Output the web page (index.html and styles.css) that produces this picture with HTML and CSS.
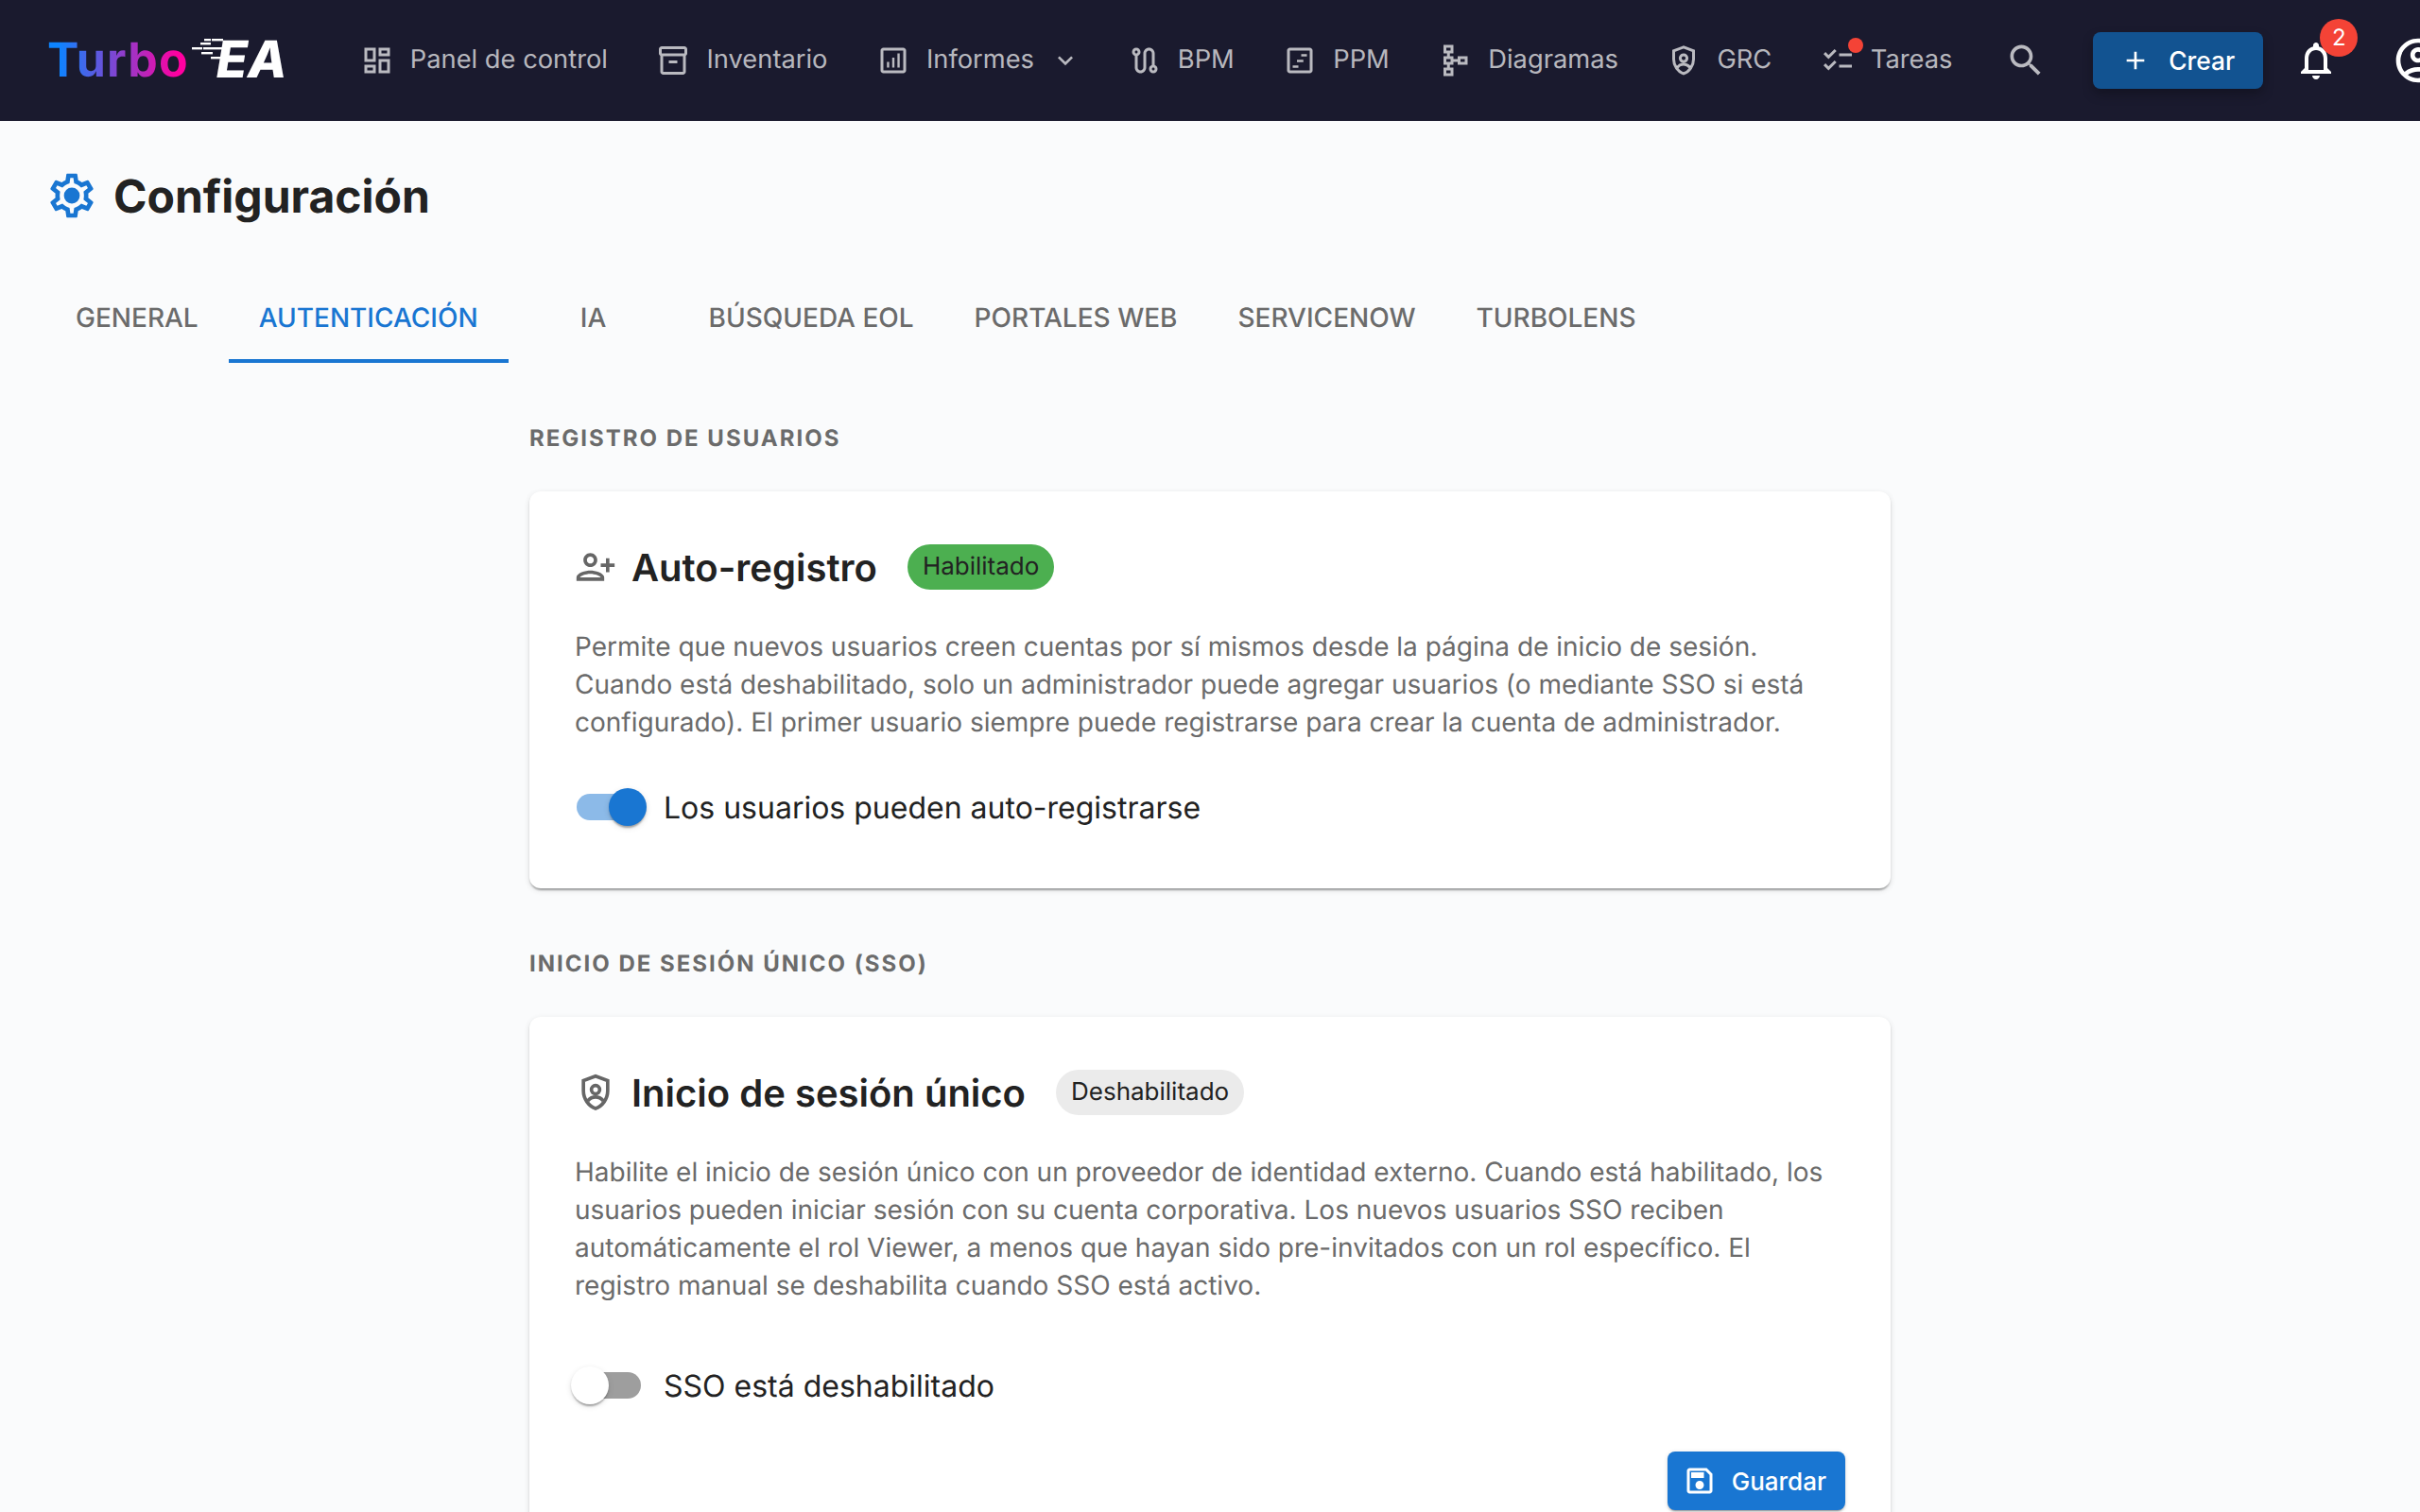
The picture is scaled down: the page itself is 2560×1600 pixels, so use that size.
FILE: index.html
```html
<!DOCTYPE html>
<html lang="es">
<head>
    <meta charset="UTF-8">
    <title>Configuración</title>
    <link rel="stylesheet" href="styles.css">
</head>
<body>
    <header class="topbar">
        <div class="logo">
            <span class="logo-turbo">Turbo</span>
            <span class="logo-ea">EA</span>
            <svg class="logo-lines" viewBox="0 0 40 24" fill="#fff">
                <rect x="13" y="0" width="7" height="2.4"/>
                <rect x="21" y="0" width="12" height="2.4"/>
                <rect x="9" y="4" width="11" height="2.4"/>
                <rect x="0" y="9" width="11" height="2.4"/>
                <rect x="12" y="9" width="20" height="2.4"/>
                <rect x="10" y="14" width="12" height="2.4"/>
                <rect x="20" y="19" width="10" height="2.4"/>
            </svg>
        </div>
        <nav class="nav">
            <a class="nav-item"><svg class="nav-icon" viewBox="0 0 24 24"><path d="M19 5v2h-4V5h4M9 5v6H5V5h4m10 8v6h-4v-6h4M9 17v2H5v-2h4M21 3h-8v6h8V3zM11 3H3v10h8V3zm10 8h-8v10h8V11zm-10 4H3v6h8v-6z"/></svg>Panel de control</a>
            <a class="nav-item"><svg class="nav-icon" viewBox="0 0 24 24"><path d="M20 2H4c-1 0-2 .9-2 2v3.01c0 .72.43 1.34 1 1.69V20c0 1.1 1.1 2 2 2h14c.9 0 2-.9 2-2V8.7c.57-.35 1-.97 1-1.69V4c0-1.1-1-2-2-2zm-1 18H5V9h14v11zm1-13H4V4h16v3z"/><path d="M9 12h6v2H9z"/></svg>Inventario</a>
            <a class="nav-item nav-item-menu"><svg class="nav-icon" viewBox="0 0 24 24"><path d="M19 3H5c-1.1 0-2 .9-2 2v14c0 1.1.9 2 2 2h14c1.1 0 2-.9 2-2V5c0-1.1-.9-2-2-2zm0 16H5V5h14v14z"/><path d="M7.5 13h1.6v4H7.5zm3.7-3h1.6v7h-1.6zm3.7-3h1.6v10h-1.6z"/></svg>Informes<svg class="nav-chevron" viewBox="0 0 24 24"><path d="M16.59 8.59 12 13.17 7.41 8.59 6 10l6 6 6-6z"/></svg></a>
            <a class="nav-item"><svg class="nav-icon" viewBox="0 0 24 24"><path d="M19 15.18V7c0-2.21-1.79-4-4-4s-4 1.79-4 4v10c0 1.1-.9 2-2 2s-2-.9-2-2V8.82C8.16 8.4 9 7.3 9 6c0-1.66-1.34-3-3-3S3 4.34 3 6c0 1.3.84 2.4 2 2.82V17c0 2.21 1.79 4 4 4s4-1.79 4-4V7c0-1.1.9-2 2-2s2 .9 2 2v8.18c-1.16.41-2 1.51-2 2.82 0 1.66 1.34 3 3 3s3-1.34 3-3c0-1.3-.84-2.4-2-2.82zM6 7c-.55 0-1-.45-1-1s.45-1 1-1 1 .45 1 1-.45 1-1 1zm12 12c-.55 0-1-.45-1-1s.45-1 1-1 1 .45 1 1-.45 1-1 1z"/></svg>BPM</a>
            <a class="nav-item"><svg class="nav-icon" viewBox="0 0 24 24"><path d="M19 3H5c-1.1 0-2 .9-2 2v14c0 1.1.9 2 2 2h14c1.1 0 2-.9 2-2V5c0-1.1-.9-2-2-2zm0 16H5V5h14v14z"/><path d="M13 7.5h4v1.6h-4zm-3 4h4.5v1.6H10zm-3 4h4v1.6H7z"/></svg>PPM</a>
            <a class="nav-item"><svg class="nav-icon" viewBox="0 0 24 24"><path d="M14 9v2h-3V9H8.5V7H11V1H4v6h2.5v2H4v6h2.5v2H4v6h7v-6H8.5v-2H11v-2h3v2h7V9h-7zM9 3v2H6V3h3zm0 8v2H6v-2h3zm0 8v2H6v-2h3zm10-6h-3v-2h3v2z"/></svg>Diagramas</a>
            <a class="nav-item"><svg class="nav-icon" viewBox="0 0 24 24"><path class="shield-stroke" d="M12 2.6 5 5.2v5.9c0 4.6 3 8.8 7 10.2 4-1.4 7-5.6 7-10.2V5.2z"/><circle class="shield-stroke" cx="12" cy="10.4" r="2.4"/><path class="shield-stroke" d="M7.6 16.8c1.2-1.4 2.7-2.1 4.4-2.1s3.2.7 4.4 2.1"/></svg>GRC</a>
            <a class="nav-item"><span class="icon-wrap"><svg class="nav-icon" viewBox="0 0 24 24"><path d="M22 7h-9v2h9V7zm0 8h-9v2h9v-2zM5.54 11 2 7.46l1.41-1.41 2.12 2.12 4.24-4.24 1.41 1.41L5.54 11zm0 8L2 15.46l1.41-1.41 2.12 2.12 4.24-4.24 1.41 1.41L5.54 19z"/></svg><span class="task-dot"></span></span>Tareas</a>
        </nav>
        <svg class="search-icon" viewBox="0 0 24 24"><path d="M15.5 14h-.79l-.28-.27C15.41 12.59 16 11.11 16 9.5 16 5.91 13.09 3 9.5 3S3 5.91 3 9.5 5.91 16 9.5 16c1.61 0 3.09-.59 4.23-1.57l.27.28v.79l5 4.99L20.49 19l-4.99-5zm-6 0C7.01 14 5 11.99 5 9.5S7.01 5 9.5 5 14 7.01 14 9.5 11.99 14 9.5 14z"/></svg>
        <button class="create-button"><svg viewBox="0 0 24 24"><path d="M19 13h-6v6h-2v-6H5v-2h6V5h2v6h6v2z"/></svg>Crear</button>
        <div class="bell">
            <svg viewBox="0 0 24 24"><path d="M12 22c1.1 0 2-.9 2-2h-4c0 1.1.9 2 2 2zm6-6v-5c0-3.07-1.63-5.64-4.5-6.32V4c0-.83-.67-1.5-1.5-1.5s-1.5.67-1.5 1.5v.68C7.64 5.36 6 7.92 6 11v5l-2 2v1h16v-1l-2-2zm-2 1H8v-6c0-2.48 1.51-4.5 4-4.5s4 2.02 4 4.5v6z"/></svg>
            <span class="bell-badge">2</span>
        </div>
        <svg class="avatar" viewBox="0 0 24 24"><path d="M12 2C6.48 2 2 6.48 2 12s4.48 10 10 10 10-4.48 10-10S17.52 2 12 2zM7.35 18.5C8.66 17.56 10.26 17 12 17s3.34.56 4.65 1.5c-1.31.94-2.91 1.5-4.65 1.5s-3.34-.56-4.65-1.5zm10.79-1.38C16.45 15.8 14.32 15 12 15s-4.45.8-6.14 2.12C4.7 15.73 4 13.95 4 12c0-4.42 3.58-8 8-8s8 3.58 8 8c0 1.95-.7 3.73-1.86 5.12z"/><path d="M12 6c-1.93 0-3.5 1.57-3.5 3.5S10.07 13 12 13s3.5-1.57 3.5-3.5S13.93 6 12 6zm0 5c-.83 0-1.5-.67-1.5-1.5S11.17 8 12 8s1.5.67 1.5 1.5S12.83 11 12 11z"/></svg>
    </header>

    <main class="page">
        <div class="page-title">
            <svg class="gear" viewBox="0 0 24 24"><path d="M19.43 12.98c.04-.32.07-.64.07-.98 0-.34-.03-.66-.07-.98l2.11-1.65c.19-.15.24-.42.12-.64l-2-3.46c-.09-.16-.26-.25-.44-.25-.06 0-.12.01-.17.03l-2.49 1c-.52-.4-1.08-.73-1.69-.98l-.38-2.65C14.46 2.18 14.25 2 14 2h-4c-.25 0-.46.18-.49.42l-.38 2.65c-.61.25-1.17.59-1.69.98l-2.49-1c-.06-.02-.12-.03-.18-.03-.17 0-.34.09-.43.25l-2 3.46c-.13.22-.07.49.12.64l2.11 1.65c-.04.32-.07.65-.07.98 0 .33.03.66.07.98l-2.11 1.65c-.19.15-.24.42-.12.64l2 3.46c.09.16.26.25.44.25.06 0 .12-.01.17-.03l2.49-1c.52.4 1.08.73 1.69.98l.38 2.65c.03.24.24.42.49.42h4c.25 0 .46-.18.49-.42l.38-2.65c.61-.25 1.17-.59 1.69-.98l2.49 1c.06.02.12.03.18.03.17 0 .34-.09.43-.25l2-3.46c.12-.22.07-.49-.12-.64l-2.11-1.65zm-1.98-1.71c.04.31.05.52.05.73 0 .21-.02.43-.05.73l-.14 1.13.89.7 1.08.84-.7 1.21-1.27-.51-1.04-.42-.9.68c-.43.32-.84.56-1.25.73l-1.06.43-.16 1.13-.2 1.35h-1.4l-.19-1.35-.16-1.13-1.06-.43c-.43-.18-.83-.41-1.23-.71l-.91-.7-1.06.43-1.27.51-.7-1.21 1.08-.84.89-.7-.14-1.13c-.03-.31-.05-.54-.05-.74s.02-.43.05-.73l.14-1.13-.89-.7-1.08-.84.7-1.21 1.27.51 1.04.42.9-.68c.43-.32.84-.56 1.25-.73l1.06-.43.16-1.13.2-1.35h1.39l.19 1.35.16 1.13 1.06.43c.43.18.83.41 1.23.71l.91.7 1.06-.43 1.27-.51.7 1.21-1.07.85-.89.7.14 1.13z"/><circle cx="12" cy="12" r="3.6"/></svg>
            <h1>Configuración</h1>
        </div>

        <div class="tabs">
            <a class="tab">General</a>
            <a class="tab tab-active">Autenticación</a>
            <a class="tab">IA</a>
            <a class="tab">Búsqueda EOL</a>
            <a class="tab">Portales web</a>
            <a class="tab">ServiceNow</a>
            <a class="tab">TurboLens</a>
        </div>

        <section class="content">
            <h2 class="section-label">Registro de usuarios</h2>
            <div class="card">
                <div class="card-header">
                    <svg class="card-icon card-icon-flip" viewBox="0 0 24 24"><path d="M15 12c2.21 0 4-1.79 4-4s-1.79-4-4-4-4 1.79-4 4 1.79 4 4 4zm0-6c1.1 0 2 .9 2 2s-.9 2-2 2-2-.9-2-2 .9-2 2-2zm0 8c-2.67 0-8 1.34-8 4v2h16v-2c0-2.66-5.33-4-8-4zm-6 4c.22-.72 3.31-2 6-2 2.7 0 5.8 1.29 6 2H9zm-3-3v-3h3v-2H6V7H4v3H1v2h3v3h2z"/></svg>
                    <h3 class="card-title">Auto-registro</h3>
                    <span class="chip chip-on">Habilitado</span>
                </div>
                <p class="card-text">Permite que nuevos usuarios creen cuentas por sí mismos desde la página de inicio de sesión. Cuando está deshabilitado, solo un administrador puede agregar usuarios (o mediante SSO si está configurado). El primer usuario siempre puede registrarse para crear la cuenta de administrador.</p>
                <div class="switch-row">
                    <span class="switch switch-on"><span class="switch-thumb"></span></span>
                    <span class="switch-label">Los usuarios pueden auto-registrarse</span>
                </div>
            </div>

            <h2 class="section-label">Inicio de sesión único (SSO)</h2>
            <div class="card">
                <div class="card-header">
                    <svg class="card-icon" viewBox="0 0 24 24"><path class="shield-stroke" d="M12 2.6 5 5.2v5.9c0 4.6 3 8.8 7 10.2 4-1.4 7-5.6 7-10.2V5.2z"/><circle class="shield-stroke" cx="12" cy="10.4" r="2.4"/><path class="shield-stroke" d="M7.6 16.8c1.2-1.4 2.7-2.1 4.4-2.1s3.2.7 4.4 2.1"/></svg>
                    <h3 class="card-title">Inicio de sesión único</h3>
                    <span class="chip">Deshabilitado</span>
                </div>
                <p class="card-text">Habilite el inicio de sesión único con un proveedor de identidad externo. Cuando está habilitado, los usuarios pueden iniciar sesión con su cuenta corporativa. Los nuevos usuarios SSO reciben automáticamente el rol Viewer, a menos que hayan sido pre-invitados con un rol específico. El registro manual se deshabilita cuando SSO está activo.</p>
                <div class="switch-row switch-row-wide">
                    <span class="switch"><span class="switch-thumb"></span></span>
                    <span class="switch-label">SSO está deshabilitado</span>
                </div>
                <div class="card-actions">
                    <button class="save-button"><svg viewBox="0 0 24 24"><path d="M17 3H5c-1.11 0-2 .9-2 2v14c0 1.1.89 2 2 2h14c1.1 0 2-.9 2-2V7l-4-4zm2 16H5V5h11.17L19 7.83V19zm-7-7c-1.66 0-3 1.34-3 3s1.34 3 3 3 3-1.34 3-3-1.34-3-3-3zM6 6h9v4H6z"/></svg>Guardar</button>
                </div>
            </div>
        </section>
    </main>
</body>
</html>
```

FILE: styles.css
```css
* {
    box-sizing: border-box;
}
html, body {
    margin: 0;
    height: 100%;
    overflow: hidden;
}
body {
    font-family: Inter, "Liberation Sans", sans-serif;
    text-rendering: geometricPrecision;
    background-color: #fafbfc;
    color: #1a1a1a;
}

/* top bar */
.topbar {
    display: flex;
    align-items: center;
    height: 128px;
    padding-left: 50px;
    background-color: #1a1a2e;
    overflow: hidden;
}
.logo {
    position: relative;
    display: flex;
    align-items: center;
    flex-shrink: 0;
    width: 254px;
    margin-right: 51px;
    line-height: 64px;
}
.logo-turbo {
    font-size: 50px;
    font-weight: 700;
    letter-spacing: 1.1px;
    background: linear-gradient(90deg, #0d84ff 8%, #ff00a0 92%);
    -webkit-background-clip: text;
    background-clip: text;
    color: transparent;
}
.logo-ea {
    margin-left: 29px;
    font-size: 54px;
    font-weight: 800;
    font-style: italic;
    color: #fff;
}
.logo-lines {
    position: absolute;
    left: 153px;
    top: 9px;
    width: 40px;
    height: 24px;
}
.nav {
    display: flex;
    align-items: center;
    flex-shrink: 0;
}
.nav-item {
    display: flex;
    align-items: center;
    gap: 17px;
    padding: 0 25.75px 4px;
    font-size: 27.3px;
    white-space: nowrap;
    color: rgba(255, 255, 255, 0.7);
}
.nav-item-menu {
    gap: 0;
    padding-right: 24px;
}
.nav-item-menu .nav-icon {
    margin-right: 17px;
}
.nav-icon {
    width: 36px;
    height: 36px;
    margin-bottom: -4px;
    fill: rgba(255, 255, 255, 0.7);
    flex-shrink: 0;
    display: block;
}
.nav-chevron {
    width: 32px;
    height: 32px;
    margin-left: 17px;
    margin-bottom: -4px;
    fill: rgba(255, 255, 255, 0.7);
}
.shield-stroke {
    fill: none;
    stroke: currentColor;
    stroke-width: 2;
}
.nav-icon .shield-stroke {
    stroke: rgba(255, 255, 255, 0.7);
}
.icon-wrap {
    position: relative;
    display: block;
}
.task-dot {
    position: absolute;
    top: -6px;
    right: -9px;
    width: 16px;
    height: 16px;
    border-radius: 50%;
    background-color: #f44336;
}
.search-icon {
    width: 44px;
    height: 44px;
    margin-left: 30px;
    flex-shrink: 0;
    fill: rgba(255, 255, 255, 0.7);
}
.create-button {
    display: flex;
    align-items: center;
    gap: 19px;
    flex-shrink: 0;
    width: 180px;
    height: 60px;
    margin-left: 49px;
    padding: 0 0 0 29px;
    border: none;
    border-radius: 8px;
    background-color: #125391;
    color: #fff;
    font-family: inherit;
    font-size: 26.4px;
    font-weight: 500;
    box-shadow: 0 6px 12px rgba(0, 0, 0, 0.25);
}
.create-button svg {
    width: 32px;
    height: 32px;
    fill: #fff;
}
.bell {
    position: relative;
    flex-shrink: 0;
    width: 48px;
    height: 48px;
    margin-left: 32px;
}
.bell svg {
    display: block;
    width: 48px;
    height: 48px;
    fill: #fff;
}
.bell-badge {
    position: absolute;
    left: 28px;
    top: -20px;
    width: 40px;
    height: 40px;
    border-radius: 50%;
    background-color: #f44336;
    color: #fff;
    font-size: 24px;
    line-height: 40px;
    text-align: center;
}
.avatar {
    flex-shrink: 0;
    width: 56px;
    height: 56px;
    margin-left: 56px;
    fill: #fff;
}

/* page heading and tabs */
.page-title {
    display: flex;
    align-items: center;
    gap: 16px;
    height: 56px;
    margin: 51px 0 0 48px;
}
.gear {
    width: 56px;
    height: 56px;
    fill: #1976d2;
}
.page-title h1 {
    margin: 0;
    font-size: 48px;
    font-weight: 700;
    color: #222;
}
.tabs {
    display: flex;
    margin: 53px 0 0 48px;
}
.tab {
    display: flex;
    align-items: center;
    justify-content: center;
    min-width: 180px;
    height: 96px;
    padding: 0 32px;
    font-size: 28px;
    font-weight: 500;
    text-transform: uppercase;
    color: #6b6b6b;
}
.tab:first-child {
    min-width: 0;
}
.tab-active {
    color: #1976d2;
    border-bottom: 4px solid #1976d2;
    padding-top: 4px;
}

/* settings column */
.content {
    width: 1440px;
    margin: 60px auto 0;
}
.section-label {
    margin: 0 0 36px;
    font-size: 24px;
    font-weight: 700;
    line-height: 40px;
    letter-spacing: 2px;
    text-transform: uppercase;
    color: #6b6b6b;
}
.card {
    margin-bottom: 60px;
    padding: 56px 48px;
    border-radius: 12px;
    background-color: #fff;
    box-shadow: 0 4px 2px -2px rgba(0, 0, 0, 0.2), 0 2px 2px 0 rgba(0, 0, 0, 0.14), 0 2px 6px 0 rgba(0, 0, 0, 0.12);
}
.card-header {
    display: flex;
    align-items: center;
    height: 48px;
}
.card-icon {
    width: 44px;
    height: 44px;
    margin-right: 16px;
    fill: #666;
    color: #666;
}
.card-icon-flip {
    transform: scaleX(-1);
}
.card-title {
    margin: 0 32px 0 0;
    font-size: 40px;
    font-weight: 600;
    color: #222;
}
.chip {
    height: 48px;
    padding: 0 16px;
    border-radius: 24px;
    background-color: #ebebeb;
    font-size: 26px;
    line-height: 48px;
    color: #222;
}
.chip-on {
    background-color: #4caf50;
}
.card-text {
    margin: 40px 0 0;
    font-size: 28px;
    line-height: 40px;
    color: #6b6b6b;
}
.switch-row {
    display: flex;
    align-items: center;
    height: 60px;
    margin-top: 40px;
}
.switch-row-wide {
    margin-top: 56px;
}
.switch {
    position: relative;
    display: block;
    width: 68px;
    height: 28px;
    margin-left: 2px;
    border-radius: 14px;
    background-color: #9e9e9e;
}
.switch-thumb {
    position: absolute;
    left: -6px;
    top: -6px;
    width: 40px;
    height: 40px;
    border-radius: 50%;
    background-color: #fff;
    box-shadow: 0 4px 2px -2px rgba(0, 0, 0, 0.2), 0 2px 2px 0 rgba(0, 0, 0, 0.14), 0 2px 6px 0 rgba(0, 0, 0, 0.12);
}
.switch-on {
    background-color: #8cbae8;
}
.switch-on .switch-thumb {
    left: 34px;
    background-color: #1976d2;
}
.switch-label {
    margin-left: 24px;
    font-size: 32px;
    color: #222;
}
.card-actions {
    display: flex;
    justify-content: flex-end;
    margin-top: 40px;
}
.save-button {
    display: flex;
    align-items: center;
    gap: 16px;
    height: 62px;
    padding: 0 20px 0 16px;
    border: none;
    border-radius: 8px;
    background-color: #1976d2;
    color: #fff;
    font-family: inherit;
    font-size: 26px;
    font-weight: 500;
    box-shadow: 0 3px 1px -2px rgba(0, 0, 0, 0.2), 0 2px 2px 0 rgba(0, 0, 0, 0.14), 0 1px 5px 0 rgba(0, 0, 0, 0.12);
}
.save-button svg {
    width: 36px;
    height: 36px;
    fill: #fff;
}
```
